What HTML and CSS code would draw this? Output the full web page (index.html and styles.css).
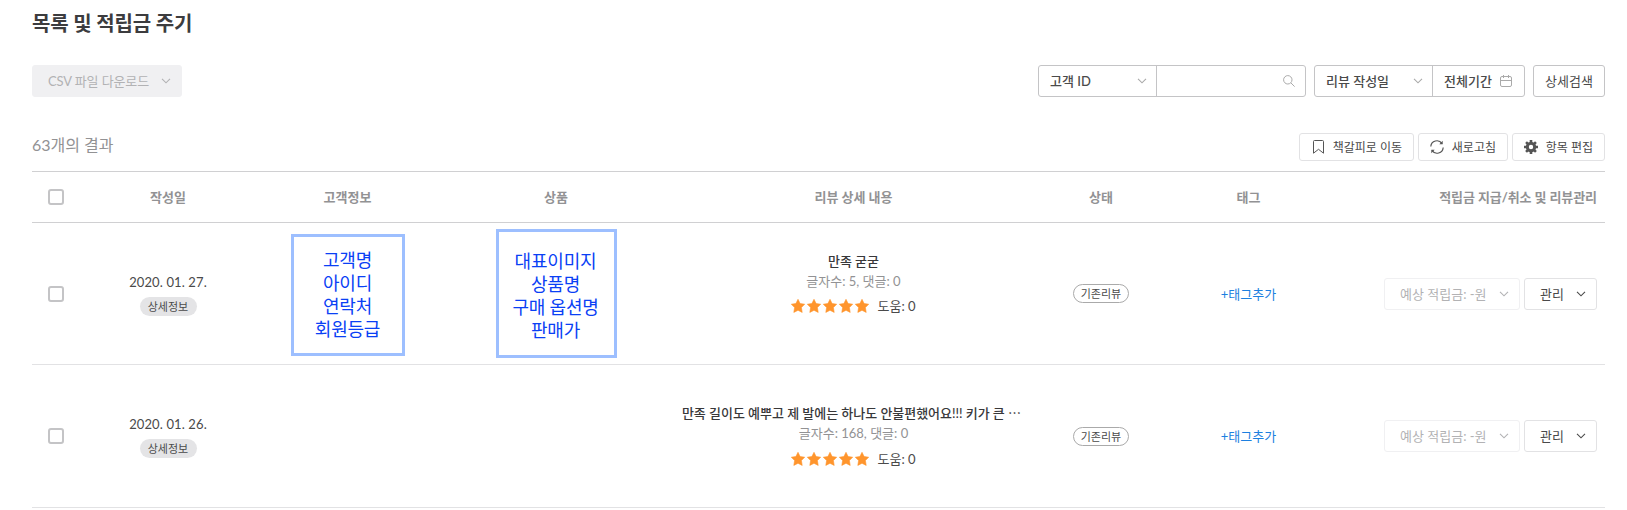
FILE: index.html
```html
<!DOCTYPE html>
<html lang="ko">

<head>
    <meta charset="UTF-8">
    <meta name="viewport" content="width=device-width, initial-scale=1.0">
    <title>목록 및 적립금 주기</title>
    <link rel="stylesheet" href="styles.css">
</head>

<body>

    <!-- shared icons -->
    <svg class="sprite">
        <symbol id="chevron" viewBox="0 0 10 6">
            <path d="M1 0.8l4 4 4-4" fill="none" stroke="currentColor" stroke-width="1.1" />
        </symbol>
        <symbol id="star" viewBox="0 0 14 14">
            <path d="M7 0.300l2.100 4.200 4.600.7-3.300 3.300.8 4.900L7 11.300l-4.200 2.100.8-4.900L.3 5.200l4.600-.7z" fill="#ff952d" stroke="#ff952d" stroke-width="0.600" stroke-linejoin="round" />
        </symbol>
    </svg>

    <div class="container">
        <h1 class="title">목록 및 적립금 주기</h1>

        <div class="toolbar">
            <button class="btn csv-btn" disabled>CSV 파일 다운로드 <svg class="chevron"><use href="#chevron" /></svg></button>
            <div class="search">
                <div class="group">
                    <div class="select">고객 ID <svg class="chevron"><use href="#chevron" /></svg></div>
                    <div class="keyword">
                        <svg class="icon" width="12" height="12" viewBox="0 0 12 12" fill="none" stroke="#aaa">
                            <circle cx="4.8" cy="4.8" r="4.2" />
                            <path d="M7.9 7.9l3.7 3.7" />
                        </svg>
                    </div>
                </div>
                <div class="group">
                    <div class="select">리뷰 작성일 <svg class="chevron"><use href="#chevron" /></svg></div>
                    <div class="period">전체기간
                        <svg class="icon" width="12" height="12" viewBox="0 0 12 12" fill="none" stroke="#aaa">
                            <rect x="0.5" y="1.5" width="11" height="10" rx="1.5" />
                            <path d="M0.5 5.5h11M3.5 0v3M8.5 0v3" />
                        </svg>
                    </div>
                </div>
                <button class="btn detail-btn">상세검색</button>
            </div>
        </div>

        <div class="result-bar">
            <div class="count">63개의 결과</div>
            <div class="actions">
                <button class="btn small bookmark">
                    <svg width="11" height="14" viewBox="0 0 11 14" fill="none" stroke="#555">
                        <path d="M1.5 0.5h8a1 1 0 0 1 1 1v11.7L5.5 9.3.5 13.2V1.5a1 1 0 0 1 1-1z" />
                    </svg>
                    <span>책갈피로 이동</span></button>
                <button class="btn small refresh">
                    <svg width="14" height="14" viewBox="0 0 14 14" fill="none" stroke="#555" stroke-width="1.2">
                        <path d="M.8 6.5A6.1 6.1 0 0 1 12 3.6M13.2 7.5A6.1 6.1 0 0 1 2 10.4" />
                        <path d="M12.7.8v3.4H9.3zM1.3 13.2V9.8h3.4z" fill="#555" stroke="none" />
                    </svg>
                    <span>새로고침</span></button>
                <button class="btn small edit">
                    <svg width="14" height="14" viewBox="0 0 14 14" fill="none" stroke="#555">
                        <circle cx="7" cy="7" r="3.7" stroke-width="3" />
                        <path d="M7 0v2.5M7 11.5v2.5M0 7h2.5M11.5 7H14M2.05 2.05l1.8 1.8M10.15 10.15l1.8 1.8M2.05 11.95l1.8-1.8M10.15 3.85l1.8-1.8" stroke-width="2.6" />
                    </svg>
                    <span>항목 편집</span></button>
            </div>
        </div>

        <table class="list">
            <colgroup>
                <col class="col-check">
                <col class="col-date">
                <col class="col-customer">
                <col class="col-product">
                <col class="col-review">
                <col class="col-status">
                <col class="col-tag">
                <col>
            </colgroup>
            <thead>
                <tr>
                    <th><span class="checkbox"></span></th>
                    <th>작성일</th>
                    <th>고객정보</th>
                    <th>상품</th>
                    <th>리뷰 상세 내용</th>
                    <th>상태</th>
                    <th>태그</th>
                    <th class="manage">적립금 지급/취소 및 리뷰관리</th>
                </tr>
            </thead>
            <tbody>
                <tr class="first">
                    <td><span class="checkbox"></span></td>
                    <td>
                        <div class="date">2020. 01. 27.</div>
                        <span class="info">상세정보</span>
                    </td>
                    <td>
                        <div class="note customer">고객명<br>아이디<br>연락처<br>회원등급</div>
                    </td>
                    <td>
                        <div class="note product">대표이미지<br>상품명<br>구매 옵션명<br>판매가</div>
                    </td>
                    <td>
                        <div class="review">
                            <div class="text">만족 굳굳</div>
                            <div class="meta">글자수: 5, 댓글: 0</div>
                            <div class="score">
                                <svg><use href="#star" /></svg>
                                <svg><use href="#star" /></svg>
                                <svg><use href="#star" /></svg>
                                <svg><use href="#star" /></svg>
                                <svg><use href="#star" /></svg>
                                <span>도움: 0</span>
                            </div>
                        </div>
                    </td>
                    <td><span class="status">기존리뷰</span></td>
                    <td><a class="add-tag">+태그추가</a></td>
                    <td class="manage">
                        <div class="manage-btns">
                            <button class="btn point" disabled>예상 적립금: -원 <svg class="chevron"><use href="#chevron" /></svg></button>
                            <button class="btn admin">관리 <svg class="chevron"><use href="#chevron" /></svg></button>
                        </div>
                    </td>
                </tr>
                <tr class="second">
                    <td><span class="checkbox"></span></td>
                    <td>
                        <div class="date">2020. 01. 26.</div>
                        <span class="info">상세정보</span>
                    </td>
                    <td></td>
                    <td></td>
                    <td>
                        <div class="review">
                            <div class="text">만족 길이도 예뿌고 제 발에는 하나도 안불편했어요!!! 키가 큰 <span class="more">⋯</span></div>
                            <div class="meta">글자수: 168, 댓글: 0</div>
                            <div class="score">
                                <svg><use href="#star" /></svg>
                                <svg><use href="#star" /></svg>
                                <svg><use href="#star" /></svg>
                                <svg><use href="#star" /></svg>
                                <svg><use href="#star" /></svg>
                                <span>도움: 0</span>
                            </div>
                        </div>
                    </td>
                    <td><span class="status">기존리뷰</span></td>
                    <td><a class="add-tag">+태그추가</a></td>
                    <td class="manage">
                        <div class="manage-btns">
                            <button class="btn point" disabled>예상 적립금: -원 <svg class="chevron"><use href="#chevron" /></svg></button>
                            <button class="btn admin">관리 <svg class="chevron"><use href="#chevron" /></svg></button>
                        </div>
                    </td>
                </tr>
            </tbody>
        </table>
    </div>

</body>

</html>
```
FILE: styles.css
```css
* {
    box-sizing: border-box;
}

body {
    margin: 0;
    background-color: #fff;
    color: #4a4a4a;
    font-family: Lato, "Noto Sans CJK KR", sans-serif;
    font-size: 13px;
    line-height: 20px;
}

.sprite {
    display: none;
}

.container {
    padding: 8px 22px 0 32px;
}

.title {
    margin: 0;
    font-size: 20px;
    line-height: 30px;
    letter-spacing: -0.13px;
    color: #3c3c3e;
}

.toolbar,
.result-bar {
    display: flex;
    justify-content: space-between;
}

.toolbar {
    margin-top: 27px;
}

.btn {
    display: flex;
    align-items: center;
    justify-content: space-between;
    height: 32px;
    padding: 0 12px 0 11px;
    border: 1px solid #c4c4c6;
    border-radius: 3px;
    background-color: #fff;
    color: #4a4a4a;
    font-family: inherit;
    font-size: 13px;
    line-height: 20px;
    white-space: nowrap;
}

.chevron {
    width: 10px;
    height: 6px;
    flex: none;
}

.csv-btn {
    width: 150px;
    padding: 0 10px 0 15px;
    border-color: #f0f0f2;
    background-color: #f0f0f2;
    color: #b2b2b4;
    letter-spacing: -0.12px;
}

.search {
    display: flex;
    gap: 8px;
    font-weight: 500;
}

.group {
    display: flex;
    height: 32px;
    border: 1px solid #c4c4c6;
    border-radius: 3px;
}

.select,
.keyword,
.period {
    display: flex;
    align-items: center;
    justify-content: space-between;
}

.select {
    width: 118px;
    padding: 0 9px 0 11px;
    border-right: 1px solid #c4c4c6;
}

.select .chevron {
    color: #aaa;
}

.keyword {
    width: 148px;
    padding: 0 10px;
    justify-content: flex-end;
}

.period {
    width: 91px;
    padding: 0 12px 0 11px;
}

.detail-btn {
    width: 72px;
}

.result-bar {
    margin-top: 36px;
    height: 38px;
}

.count {
    padding-top: 2px;
    font-size: 16px;
    color: #929294;
}

.actions {
    display: flex;
    gap: 4px;
}

.small {
    height: 28px;
    padding: 0 11px 0 13px;
    border-color: #e2e2e4;
    font-size: 12px;
}

.small span {
    padding-top: 1px;
}

.bookmark {
    width: 115px;
}

.refresh {
    width: 90px;
    padding-left: 11px;
}

.edit {
    width: 93px;
    padding-left: 11px;
}

.list {
    width: 100%;
    table-layout: fixed;
    border-collapse: separate;
    border-spacing: 0;
    border-top: 1px solid #d0d0d2;
    text-align: center;
}

.col-check {
    width: 48px;
}

.col-date {
    width: 176px;
}

.col-customer {
    width: 183px;
}

.col-product {
    width: 234px;
}

.col-review {
    width: 361px;
}

.col-status {
    width: 134px;
}

.col-tag {
    width: 161px;
}

.list th,
.list td {
    padding: 0;
    vertical-align: middle;
}

.list th {
    height: 51px;
    border-bottom: 1px solid #d0d0d2;
    color: #929294;
}

.list td {
    border-bottom: 1px solid #e2e2e4;
}

.first td {
    height: 142px;
}

.second td {
    height: 143px;
}

.list .manage {
    padding-right: 8px;
    text-align: right;
}

th.manage {
    letter-spacing: -0.08px;
}

.checkbox {
    display: block;
    width: 16px;
    height: 16px;
    margin: 0 auto;
    border: 2px solid #c4c4c6;
    border-radius: 3px;
}

.date {
    letter-spacing: 0.12px;
}

.info {
    display: block;
    width: 57px;
    height: 19px;
    margin: 5px auto 0;
    border-radius: 10px;
    background-color: #e4e4e6;
    font-size: 11px;
    line-height: 19px;
}

/* blue field guide boxes */
.note {
    margin: 0 auto;
    border: 3px solid #9dbfff;
    color: #0a40f5;
    font-size: 18px;
    line-height: 23px;
    letter-spacing: -0.2px;
}

.customer {
    width: 114px;
    height: 122px;
    margin-top: 2px;
    padding-top: 12px;
}

.product {
    width: 121px;
    height: 129px;
    padding-top: 18px;
    padding-right: 1px;
}

.review .text {
    margin-left: -4px;
    color: #38383a;
    font-weight: 500;
    letter-spacing: -0.03px;
    white-space: nowrap;
}

.first .review .text {
    margin-left: 0;
}

.more {
    font-family: "Noto Sans CJK KR", sans-serif;
}

.review .meta {
    color: #929294;
}

.first .review {
    padding-bottom: 20px;
}

.second .review {
    padding-bottom: 1px;
}

.score {
    display: flex;
    align-items: center;
    justify-content: center;
    gap: 2px;
    margin-top: 5px;
}

.second .score {
    margin-top: 6px;
}

.score svg {
    width: 14px;
    height: 14px;
}

.score span {
    margin-left: 6px;
}

.status {
    display: block;
    width: 56px;
    height: 19px;
    margin: 0 auto;
    border: 1px solid #aaa;
    border-radius: 10px;
    font-size: 11px;
    line-height: 17px;
}

.add-tag {
    color: #1c80e0;
}

.manage-btns {
    display: flex;
    justify-content: flex-end;
    gap: 4px;
}

.point {
    width: 136px;
    padding: 0 10px 0 15px;
    border-color: #f0f0f2;
    color: #b2b2b4;
}

.admin {
    width: 73px;
    padding: 0 10px 0 15px;
    border-color: #e2e2e4;
}
```
